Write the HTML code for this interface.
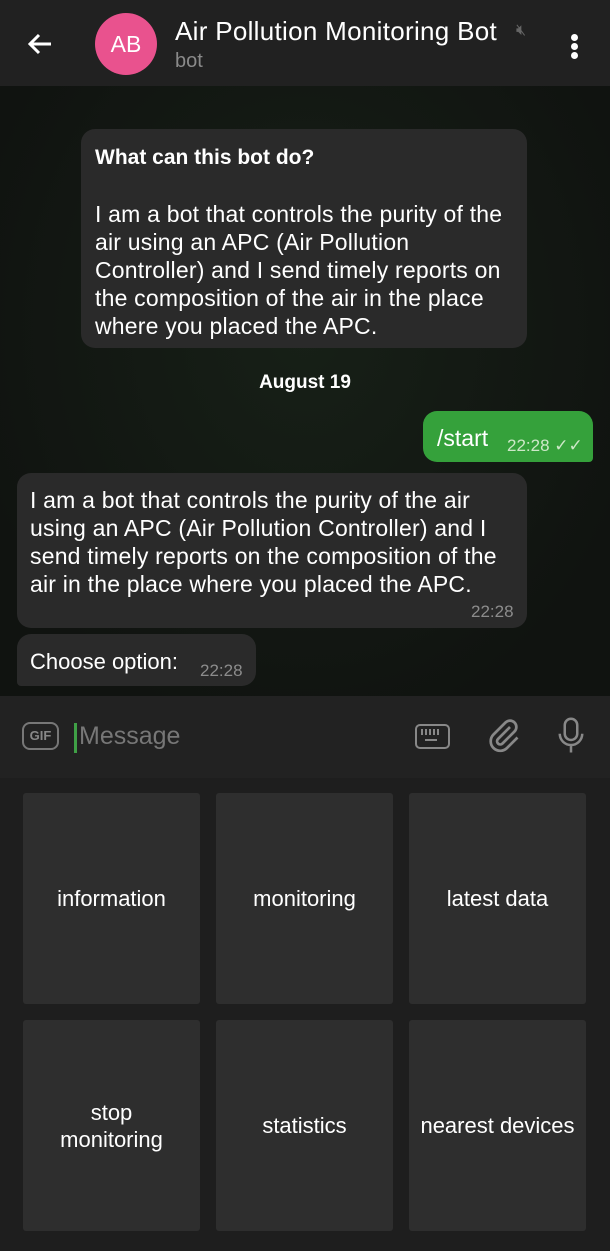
<!DOCTYPE html><html><head><style>
body{margin:0;width:610px;height:1251px;overflow:hidden;font-family:"Liberation Sans",sans-serif;background:#1e1e1e;position:relative}
.a{position:absolute}
.hdr{left:0;top:0;width:610px;height:86px;background:#212121}
.chat{left:0;top:86px;width:610px;height:610px;background:radial-gradient(ellipse at 50% 40%,#172017,#101310 80%)}
.b{background:#2a2a2a;color:#fff;border-radius:14px;font-size:23px;line-height:28px;white-space:nowrap;letter-spacing:0.2px}
.t{color:#8c8c8c;font-size:17px}
.k{background:#2e2e2e;color:#fff;font-size:22px;display:flex;align-items:center;justify-content:center;text-align:center;line-height:27px;border-radius:3px}
</style></head><body>
<div class="a hdr"></div>
<svg class="a" style="left:26px;top:30px" width="28" height="28" viewBox="0 0 28 28"><path d="M25 14H4M13 5L4 14l9 9" stroke="#fff" stroke-width="3" fill="none"/></svg>
<div class="a" style="left:95px;top:13px;width:62px;height:62px;border-radius:50%;background:#e9528e;color:#fff;font-size:23px;display:flex;align-items:center;justify-content:center">AB</div>
<div class="a" style="left:175px;top:16px;color:#fff;font-size:26px;letter-spacing:0.3px;white-space:nowrap">Air Pollution Monitoring Bot</div>
<div class="a" style="left:516px;top:22px;color:#666;font-size:16px">🔇︎</div>
<div class="a" style="left:175px;top:50px;color:#8a8a8a;font-size:20px">bot</div>
<div class="a" style="left:571px;top:34px;width:7px;height:7px;border-radius:50%;background:#fff;box-shadow:0 9px 0 #fff,0 18px 0 #fff"></div>
<div class="a chat"></div>
<div class="a b" style="left:81px;top:129px;width:446px;height:219px;box-sizing:border-box;padding:13px 14px"><b style="font-size:21px;letter-spacing:0">What can this bot do?</b><br><br>I am a bot that controls the purity of the<br>air using an APC (Air Pollution<br>Controller) and I send timely reports on<br>the composition of the air in the place<br>where you placed the APC.</div>
<div class="a" style="left:0;width:610px;top:372px;text-align:center;color:#fff;font-size:19px;font-weight:bold">August 19</div>
<div class="a" style="left:423px;top:411px;width:170px;height:51px;background:#35a13b;border-radius:14px 14px 4px 14px"></div>
<div class="a" style="left:437px;top:425px;color:#fff;font-size:23px">/start</div>
<div class="a" style="left:507px;top:436px;color:#cde8c8;font-size:17px">22:28 ✓✓</div>
<div class="a b" style="left:17px;top:473px;width:510px;height:155px;box-sizing:border-box;padding:13px 13px">I am a bot that controls the purity of the air<br>using an APC (Air Pollution Controller) and I<br>send timely reports on the composition of the<br>air in the place where you placed the APC.</div>
<div class="a t" style="left:471px;top:602px">22:28</div>
<div class="a b" style="left:17px;top:634px;width:239px;height:52px;border-radius:14px 14px 14px 4px"></div>
<div class="a" style="left:30px;top:649px;color:#fff;font-size:22px">Choose option:</div>
<div class="a t" style="left:200px;top:661px">22:28</div>
<div class="a" style="left:0;top:696px;width:610px;height:82px;background:#222"></div>
<div class="a" style="left:22px;top:722px;width:33px;height:24px;border:2px solid #777;border-radius:8px;color:#888;font-size:13px;font-weight:bold;text-align:center;line-height:24px">GIF</div>
<div class="a" style="left:74px;top:723px;width:3px;height:30px;background:#3fa046"></div>
<div class="a" style="left:79px;top:722px;color:#777;font-size:25px">Message</div>
<div class="a" style="left:415px;top:724px;width:31px;height:21px;border:2px solid #888;border-radius:5px"></div>
<div class="a" style="left:421px;top:729px;width:20px;height:6px;background:repeating-linear-gradient(90deg,#888 0 2px,transparent 2px 4px)"></div>
<div class="a" style="left:425px;top:739px;width:12px;height:2px;background:#888"></div>
<svg class="a" style="left:486px;top:718px" width="36" height="36" viewBox="0 0 24 24"><path d="M16 6l-8 8a2 2 0 003 3l8-8a4 4 0 00-6-6l-8 8a6 6 0 009 9l7-7" stroke="#888" stroke-width="1.8" fill="none"/></svg>
<svg class="a" style="left:556px;top:716px" width="30" height="38" viewBox="0 0 24 30"><rect x="7" y="2" width="10" height="17" rx="5" stroke="#888" stroke-width="2" fill="none"/><path d="M3 14a9 9 0 0018 0M12 23v6" stroke="#888" stroke-width="2" fill="none"/></svg>
<div class="a k" style="left:23px;top:793px;width:177px;height:211px">information</div>
<div class="a k" style="left:216px;top:793px;width:177px;height:211px">monitoring</div>
<div class="a k" style="left:409px;top:793px;width:177px;height:211px">latest data</div>
<div class="a k" style="left:23px;top:1020px;width:177px;height:211px">stop<br>monitoring</div>
<div class="a k" style="left:216px;top:1020px;width:177px;height:211px">statistics</div>
<div class="a k" style="left:409px;top:1020px;width:177px;height:211px">nearest devices</div>
</body></html>
